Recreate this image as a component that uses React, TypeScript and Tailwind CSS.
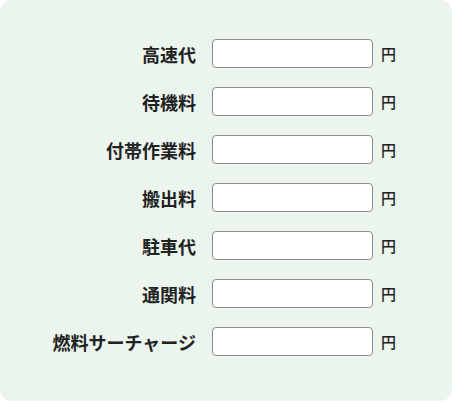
import React from 'react';

const FIELDS = [
  '高速代',
  '待機料',
  '付帯作業料',
  '搬出料',
  '駐車代',
  '通関料',
  '燃料サーチャージ',
];

export default function App() {
  return (
    <div
      className="w-[452px] h-[401px] bg-[#ebf5ee] rounded-xl pt-[39px] text-[#222]"
      style={{ fontFamily: '"Noto Sans CJK JP", "Noto Sans", sans-serif' }}
    >
      <div className="grid grid-cols-[212px_161px_auto] gap-y-[19px] items-center">
        {FIELDS.map((label) => (
          <React.Fragment key={label}>
            <label className="pr-4 text-right text-[18px] leading-none font-bold whitespace-nowrap">
              {label}
            </label>
            <input
              type="text"
              className="h-[29px] w-[161px] bg-white border border-[#8c8c8c] rounded-[4px] px-2 text-sm outline-none"
            />
            <span className="pl-2 text-[15px] leading-none font-medium">円</span>
          </React.Fragment>
        ))}
      </div>
    </div>
  );
}
